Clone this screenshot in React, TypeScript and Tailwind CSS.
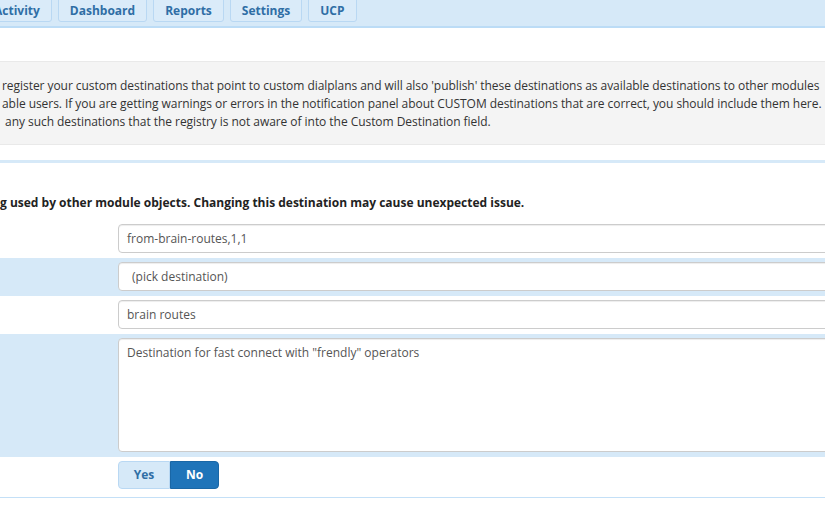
import React from 'react';

const tabs = ['Dashboard', 'Reports', 'Settings', 'UCP'];

function Tab({ label, className = '' }: { label: string; className?: string }) {
  return (
    <div
      className={`h-[23px] -mt-[1px] flex items-center px-[11px] rounded-b-[3px] border border-[#b9d8f3] bg-[#daebf9] text-[12px] font-bold text-[#2f6ea5] whitespace-nowrap ${className}`}
    >
      {label}
    </div>
  );
}

function Row({ blue, children }: { blue?: boolean; children: React.ReactNode }) {
  return (
    <div className={`flex pt-[4px] pb-[5px] ${blue ? 'bg-[#d6e9f8]' : 'bg-white'}`}>
      <div className="w-[118px] shrink-0" />
      <div className="flex-1 overflow-hidden">{children}</div>
    </div>
  );
}

function Field({ value, pad = 'pl-[8px]' }: { value: string; pad?: string }) {
  return (
    <div
      className={`h-[29px] w-[760px] flex items-center ${pad} border border-[#cccccc] rounded-[4px] bg-white shadow-[inset_0_1px_1px_rgba(0,0,0,0.075)] text-[12px] text-[#555555] whitespace-nowrap`}
    >
      {value}
    </div>
  );
}

export default function App() {
  return (
    <div
      className="w-[825px] h-[510px] overflow-hidden bg-white text-[#333333]"
      style={{ fontFamily: '"Open Sans", "Liberation Sans", sans-serif' }}
    >
      {/* top nav */}
      <div className="h-[28px] bg-[#d6e9f8] border-b-2 border-[#bcdcf6] flex gap-[6px] overflow-hidden">
        <Tab label="Activity" className="-ml-[18px]" />
        {tabs.map((t) => (
          <Tab key={t} label={t} />
        ))}
      </div>

      <div className="h-[33px]" />

      {/* info box */}
      <div className="bg-[#f4f4f4] border-y border-[#e9e9e9] pt-[15px] pb-[13px] pl-[2px] text-[12px] leading-[18px] tracking-[-0.05px] whitespace-nowrap overflow-hidden">
        <div>register your custom destinations that point to custom dialplans and will also 'publish' these destinations as available destinations to other modules</div>
        <div>able users. If you are getting warnings or errors in the notification panel about CUSTOM destinations that are correct, you should include them here.</div>
        <div>&nbsp;any such destinations that the registry is not aware of into the Custom Destination field.</div>
      </div>

      <div className="h-[15px]" />
      <div className="border-t-[3px] border-[#d6e9f8]" />

      <div className="pt-[31px] pb-[8px] text-[12px] leading-[18px] font-bold text-[#222222] whitespace-nowrap">
        g used by other module objects. Changing this destination may cause unexpected issue.
      </div>

      <Row>
        <Field value="from-brain-routes,1,1" />
      </Row>
      <Row blue>
        <Field value="(pick destination)" pad="pl-[13px]" />
      </Row>
      <Row>
        <Field value="brain routes" />
      </Row>
      <Row blue>
        <div className="h-[114px] w-[760px] pl-[8px] pt-[5px] border border-[#cccccc] rounded-[4px] bg-white shadow-[inset_0_1px_1px_rgba(0,0,0,0.075)] text-[12px] leading-[18px] text-[#555555] whitespace-nowrap">
          Destination for fast connect with "frendly" operators
        </div>
      </Row>
      <Row>
        <div className="flex h-[28px] text-[12px] font-bold">
          <div className="w-[52px] flex items-center justify-center bg-[#d6e9f8] border border-[#b9d8f3] rounded-l-[4px] text-[#2f6ea5]">
            Yes
          </div>
          <div className="w-[49px] flex items-center justify-center bg-[#1f74b9] border border-[#1a67a6] rounded-r-[4px] text-white">
            No
          </div>
        </div>
      </Row>
      <div className="h-[3px]" />
      <div className="border-t border-[#c4e0f7]" />
    </div>
  );
}
